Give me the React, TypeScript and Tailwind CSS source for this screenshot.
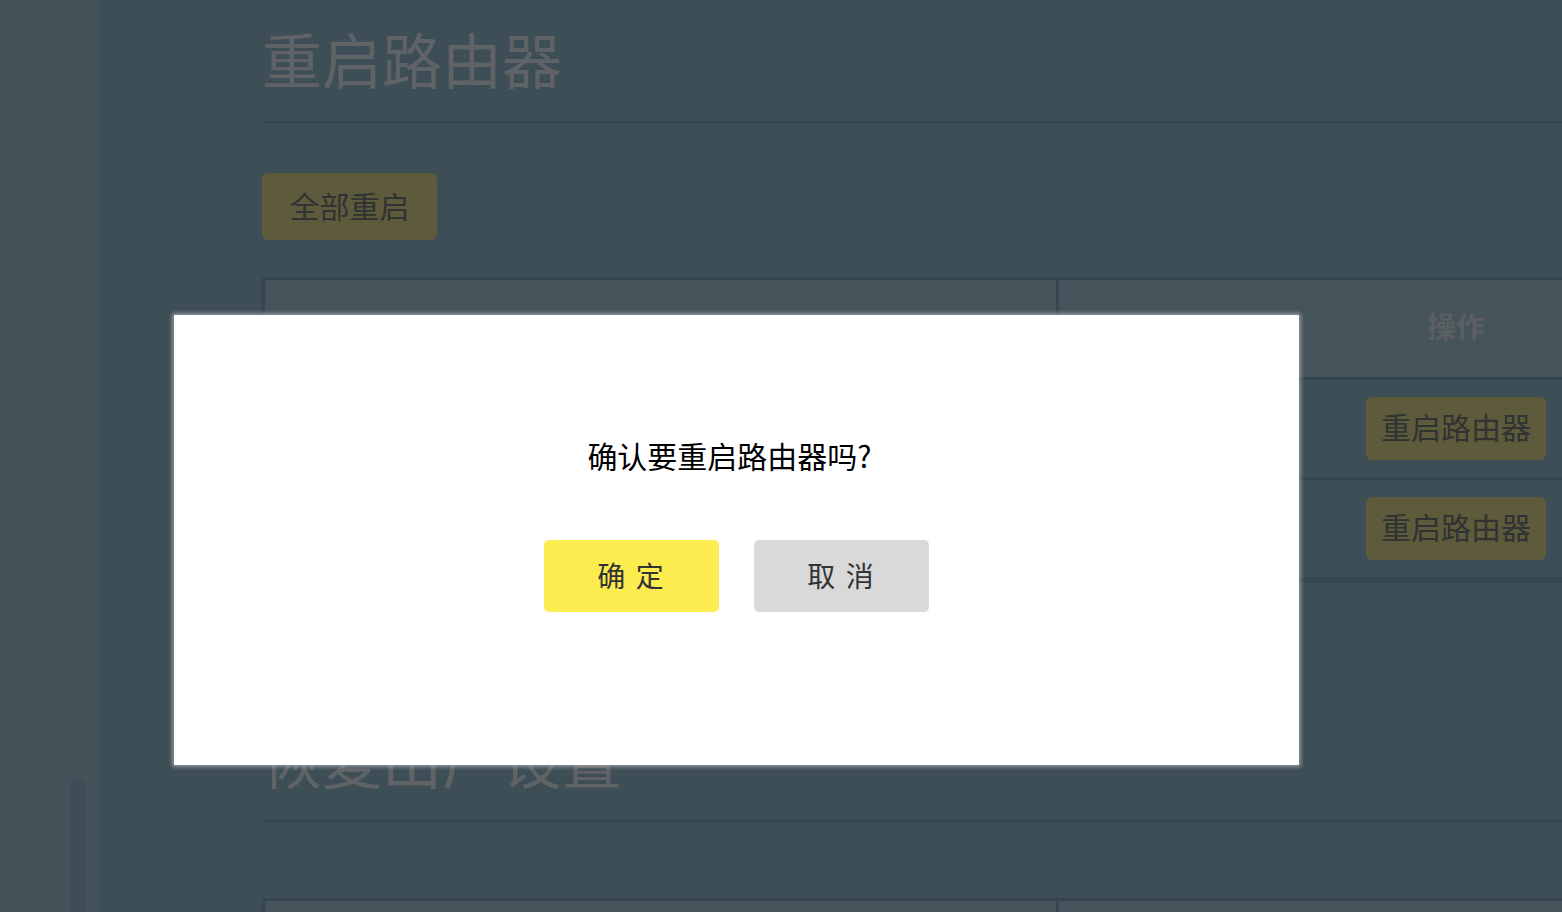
import React from 'react';

const rows = ['router-1', 'router-2'];

function RouterTable({ withRows }: { withRows: boolean }) {
  return (
    <div className="w-[1591px] border-[3px] border-[#36464e] border-r-0">
      <div className="flex h-[100px] bg-[#45535a] border-b-[3px] border-[#36464e]">
        <div className="w-1/2 border-r-[3px] border-[#36464e]" />
        <div className="w-1/2 flex items-center justify-center pb-[5px] text-[29px] font-bold text-[#5b5f61]">
          {withRows ? '操作' : ''}
        </div>
      </div>
      {withRows &&
        rows.map(id => (
          <div key={id} className="flex h-[100px] border-b-[3px] border-[#36464e]">
            <div className="w-1/2" />
            <div className="w-1/2 flex items-center justify-center">
              <button className="w-[180px] h-[63px] pb-[4px] rounded-md bg-[#5e5a3c] text-[30px] text-[#2f3331]">
                重启路由器
              </button>
            </div>
          </div>
        ))}
    </div>
  );
}

export default function App() {
  return (
    <div className="relative h-[912px] w-[1562px] overflow-hidden bg-[#3e4e56] flex font-['Noto_Sans_CJK_SC',sans-serif]">
      {/* Sidebar */}
      <aside className="w-[100px] shrink-0 bg-[#44525a] flex flex-col justify-end pl-[70px]">
        <div className="w-[15px] h-[135px] rounded-t-full bg-[#3f4e56]" />
      </aside>

      {/* Main */}
      <main className="flex-1 min-w-0 pl-[162px] pt-[28px]">
        <section>
          <h1 className="text-[60px] leading-[60px] text-[#5f6365]">重启路由器</h1>
          <div className="mt-[33px] w-[1591px] h-[2px] bg-[#36464e]" />
          <button className="block mt-[50px] w-[175px] h-[67px] pb-[3px] rounded-md bg-[#5e5a3c] text-[30px] text-[#2f3331]">
            全部重启
          </button>
          <div className="mt-[37px]">
            <RouterTable withRows />
          </div>
        </section>

        <section className="mt-[145px]">
          <h1 className="text-[60px] leading-[60px] text-[#5f6365]">恢复出厂设置</h1>
          <div className="mt-[32px] w-[1591px] h-[2px] bg-[#36464e]" />
          <div className="mt-[76px]">
            <RouterTable withRows={false} />
          </div>
        </section>
      </main>

      {/* Confirm dialog */}
      <div className="absolute left-[174px] top-[315px] w-[1125px] h-[450px] bg-white shadow-[0_0_4px_2px_rgba(190,195,198,0.6)] flex flex-col items-center pt-[125px]">
        <p className="text-[30px] leading-[30px] text-black mr-[14px]">确认要重启路由器吗?</p>
        <div className="mt-[70px] flex gap-[35px]">
          <button className="w-[175px] h-[72px] pb-[2px] rounded-[5px] bg-[#fcec50] text-[28px] text-[#333333] tracking-[2px]">
            确 定
          </button>
          <button className="w-[175px] h-[72px] pb-[2px] rounded-[5px] bg-[#d9d9d9] text-[28px] text-[#333333] tracking-[2px]">
            取 消
          </button>
        </div>
      </div>
    </div>
  );
}
